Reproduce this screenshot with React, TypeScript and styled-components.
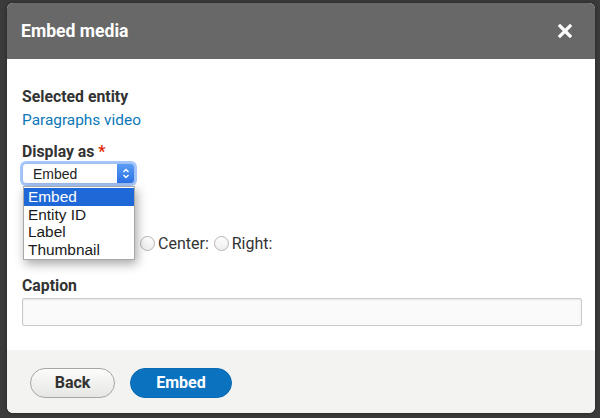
import React from "react";
import styled, { createGlobalStyle } from "styled-components";

const GlobalStyle = createGlobalStyle`
  html, body {
    margin: 0;
    padding: 0;
    width: 600px;
    height: 418px;
    overflow: hidden;
    background: #3b3b3b;
  }
  * {
    box-sizing: border-box;
  }
`;

const uiFont = `Roboto, Lato, "Liberation Sans", sans-serif`;
const menuFont = `"Liberation Sans", "Open Sans", sans-serif`;

const alignOptions = ["Center:", "Right:"];
const displayOptions = ["Embed", "Entity ID", "Label", "Thumbnail"];

export default function App() {
  return (
    <>
      <GlobalStyle />
      <Backdrop>
        <Dialog>
          <Header>
            <Title>Embed media</Title>
            <Close aria-label="Close">
              <svg width="14" height="14" viewBox="0 0 14 14">
                <path d="M2 2 L12 12 M12 2 L2 12" stroke="#fff" strokeWidth="3.2" strokeLinecap="square" />
              </svg>
            </Close>
          </Header>
          <Body>
            <Label>Selected entity</Label>
            <EntityLink href="#">Paragraphs video</EntityLink>

            <Field>
              <Label>
                Display as <Required>*</Required>
              </Label>
              <SelectWrap>
                <Select>
                  <SelectValue>Embed</SelectValue>
                  <Stepper>
                    <svg width="8" height="13" viewBox="0 0 8 13">
                      <path d="M1.5 5 L4 2.5 L6.5 5 M1.5 8 L4 10.5 L6.5 8" stroke="#fff" strokeWidth="1.4" fill="none" />
                    </svg>
                  </Stepper>
                </Select>
                <Menu>
                  {displayOptions.map((o, i) => (
                    <MenuItem key={o} $active={i === 0}>{o}</MenuItem>
                  ))}
                </Menu>
              </SelectWrap>
            </Field>

            <RadioRow>
              {alignOptions.map((o) => (
                <RadioOption key={o}>
                  <Radio />
                  {o}
                </RadioOption>
              ))}
            </RadioRow>

            <CaptionField>
              <Label>Caption</Label>
              <TextInput />
            </CaptionField>
          </Body>
          <Footer>
            <SecondaryButton>Back</SecondaryButton>
            <PrimaryButton>Embed</PrimaryButton>
          </Footer>
        </Dialog>
      </Backdrop>
    </>
  );
}

const Backdrop = styled.div`
  width: 600px;
  height: 418px;
  padding: 3px 5px 5px 7px;
  background: #3b3b3b;
`;

const Dialog = styled.div`
  width: 588px;
  height: 410px;
  border-radius: 6px;
  overflow: hidden;
  display: flex;
  flex-direction: column;
  background: #fff;
  box-shadow: 0 0 4px rgba(0, 0, 0, 0.4);
`;

const Header = styled.div`
  height: 56px;
  flex: none;
  background: #686868;
  display: flex;
  align-items: center;
  justify-content: space-between;
  padding: 0 23px 0 14px;
`;

const Title = styled.h1`
  margin: 0;
  font-family: ${uiFont};
  font-weight: 700;
  font-size: 17.6px;
  color: #fff;
`;

const Close = styled.button`
  border: 0;
  background: none;
  padding: 0;
  width: 14px;
  height: 14px;
  display: flex;
`;

const Body = styled.div`
  flex: 1;
  padding: 29px 13px 0 15px;
  display: flex;
  flex-direction: column;
  font-family: ${uiFont};
  color: #333;
`;

const Label = styled.div`
  font-weight: 700;
  font-size: 15.8px;
  line-height: 18px;
  color: #333;
`;

const Required = styled.span`
  color: #e62600;
`;

const EntityLink = styled.a`
  margin-top: 5px;
  font-size: 15.4px;
  line-height: 18px;
  color: #0d77b8;
  text-decoration: none;
`;

const Field = styled.div`
  margin-top: 14px;
  display: flex;
  flex-direction: column;
  gap: 2px;
`;

const SelectWrap = styled.div`
  position: relative;
  width: 113px;
  height: 21px;
`;

const Select = styled.div`
  width: 113px;
  height: 21px;
  border-radius: 4px;
  border: 1px solid #9ebef0;
  box-shadow: 0 0 0 2px #a5c6fb;
  background: #fff;
  display: flex;
  align-items: center;
  overflow: hidden;
`;

const SelectValue = styled.span`
  flex: 1;
  padding-left: 10px;
  font-family: ${menuFont};
  font-size: 14px;
  color: #222;
`;

const Stepper = styled.span`
  width: 17px;
  height: 100%;
  display: flex;
  align-items: center;
  justify-content: center;
  background: linear-gradient(#5a9cf3, #2a72e6);
`;

const Menu = styled.ul`
  position: absolute;
  z-index: 2;
  top: 23px;
  left: 1px;
  width: 112px;
  margin: 0;
  padding: 1px 0;
  list-style: none;
  background: #fff;
  border: 1px solid #a8a8a8;
  box-shadow: 2px 4px 10px rgba(0, 0, 0, 0.35);
`;

const MenuItem = styled.li<{ $active?: boolean }>`
  height: 17.6px;
  line-height: 17.6px;
  padding-left: 4px;
  font-family: ${menuFont};
  font-size: 15.4px;
  color: ${(p) => (p.$active ? "#fff" : "#1a1a1a")};
  background: ${(p) => (p.$active ? "#1f68d8" : "transparent")};
`;

const RadioRow = styled.div`
  margin-top: 50px;
  display: flex;
  gap: 5px;
  padding-left: 118px;
`;

const RadioOption = styled.label`
  display: flex;
  align-items: center;
  gap: 3px;
  font-size: 16px;
  color: #333;
`;

const Radio = styled.span`
  width: 15px;
  height: 15px;
  border-radius: 50%;
  border: 1px solid #b5b5b5;
  background: linear-gradient(#fdfdfd, #eee);
`;

const CaptionField = styled.div`
  margin-top: 24px;
  display: flex;
  flex-direction: column;
  gap: 3px;
`;

const TextInput = styled.input`
  width: 560px;
  height: 28px;
  border: 1px solid #c9c9c9;
  border-radius: 2px;
  background: #fafafa;
  box-shadow: inset 0 1px 2px rgba(0, 0, 0, 0.08);
`;

const Footer = styled.div`
  height: 63px;
  flex: none;
  background: #f3f3f2;
  display: flex;
  align-items: center;
  gap: 15px;
  padding: 2px 0 0 23px;
`;

const ButtonBase = styled.button`
  height: 30px;
  border-radius: 20px;
  font-family: ${uiFont};
  font-weight: 700;
  font-size: 16px;
  padding: 0;
  cursor: pointer;
`;

const SecondaryButton = styled(ButtonBase)`
  width: 85px;
  border: 1px solid #a6a6a6;
  color: #333;
  background: linear-gradient(#fcfcfb, #e6e6e3);
`;

const PrimaryButton = styled(ButtonBase)`
  width: 102px;
  border: 1px solid #0a6bb3;
  color: #fff;
  background: #0b72c0;
`;
